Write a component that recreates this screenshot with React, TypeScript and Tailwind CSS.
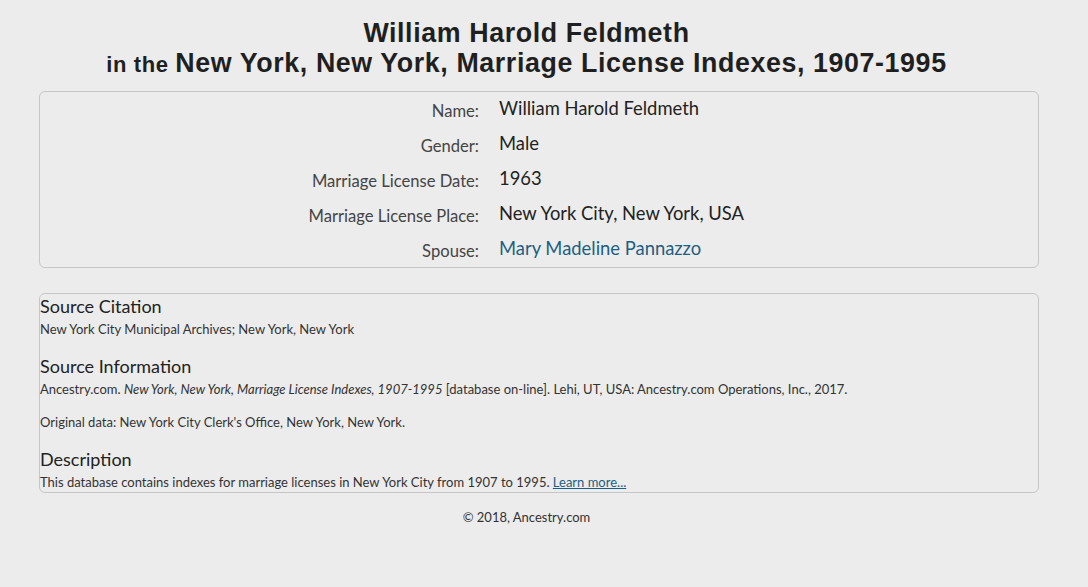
const rows: [string, string, boolean?][] = [
  ["Name:", "William Harold Feldmeth"],
  ["Gender:", "Male"],
  ["Marriage License Date:", "1963"],
  ["Marriage License Place:", "New York City, New York, USA"],
  ["Spouse:", "Mary Madeline Pannazzo", true],
];

export default function App() {
  return (
    <div className="min-h-[587px] w-[1088px] bg-[#ececec] pt-[18px] font-['Lato',sans-serif] text-[#333]">
      <h1 className="w-[1053px] text-center font-['Liberation_Sans',sans-serif] font-bold leading-[30px] tracking-[0.6px] text-[#1f1f1f]">
        <span className="block text-[26.8px]">William Harold Feldmeth</span>
        <span className="block text-[26.8px]">
          <span className="text-[22px]">in the </span>
          New York, New York, Marriage License Indexes, 1907-1995
        </span>
      </h1>

      <div className="ml-[39px] mt-[11px] w-[1000px] rounded-md border border-[#c6c6c6]">
        {rows.map(([label, value, link]) => (
          <div key={label} className="grid h-[35px] grid-cols-[439px_1fr] items-center gap-[20px]">
            <div className="pt-[3px] text-right text-[16.6px] text-[#444]">{label}</div>
            <div className={`pb-[1px] text-[18.4px] ${link ? "text-[#1d5f82]" : "text-[#222]"}`}>{value}</div>
          </div>
        ))}
      </div>

      <div className="ml-[39px] mt-[25px] w-[1000px] rounded-md border border-[#c6c6c6] text-[13px] text-[#333]">
        <h2 className="text-[18px] leading-[25px] text-[#222]">Source Citation</h2>
        <p className="leading-[20px]">New York City Municipal Archives; New York, New York</p>

        <h2 className="mt-[14px] text-[18px] leading-[26px] text-[#222]">Source Information</h2>
        <p className="leading-[20px]">
          Ancestry.com. <i>New York, New York, Marriage License Indexes, 1907-1995</i> [database on-line]. Lehi,
          UT, USA: Ancestry.com Operations, Inc., 2017.
        </p>
        <p className="mt-[13px] leading-[20px]">Original data: New York City Clerk's Office, New York, New York.</p>

        <h2 className="mt-[14px] text-[18px] leading-[26px] text-[#222]">Description</h2>
        <p className="leading-[20px]">
          This database contains indexes for marriage licenses in New York City from 1907 to 1995.{" "}
          <a href="#" className="text-[#1d5f82] underline">
            Learn more...
          </a>
        </p>
      </div>

      <p className="mt-[15px] w-[1053px] text-center text-[13px] text-[#333]">© 2018, Ancestry.com</p>
    </div>
  );
}
